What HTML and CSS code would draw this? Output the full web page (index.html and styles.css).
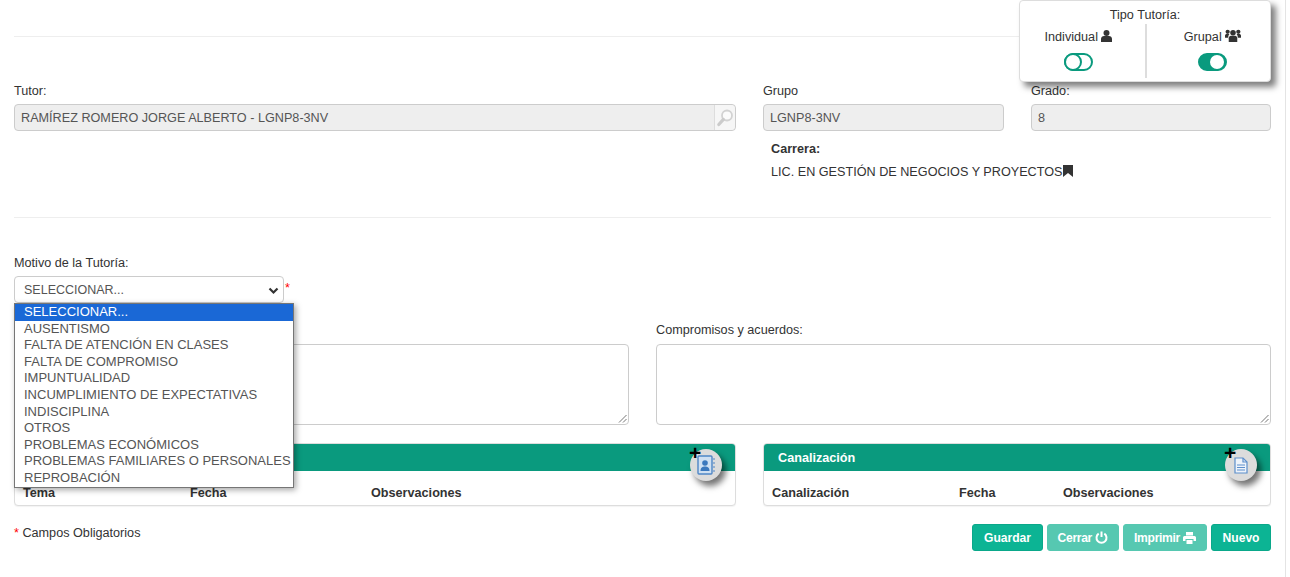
FILE: index.html
```html
<!DOCTYPE html>
<html lang="es">
<head>
<meta charset="utf-8">
<title>Tutoría</title>
<link rel="stylesheet" href="styles.css">
</head>
<body>
<main class="page">
  <hr class="rule first-rule">
  <section class="row-top">
    <div class="field">
      <label>Tutor:</label>
      <div class="input disabled tutor">
        <span>RAMÍREZ ROMERO JORGE ALBERTO - LGNP8-3NV</span>
        <span class="lookup">
          <svg width="18" height="18" viewBox="0 0 18 18"><circle cx="11" cy="6.500" r="5" fill="#fbfbfb" stroke="#d2d2d2" stroke-width="1.800"/><path d="M7.400 10.400 2.800 15.500" stroke="#cbcbcb" stroke-width="3.200" stroke-linecap="round"/></svg>
        </span>
      </div>
    </div>
    <div class="field">
      <label>Grupo</label>
      <div class="input disabled">LGNP8-3NV</div>
      <div class="carrera">
        <strong>Carrera:</strong>
        <p>LIC. EN GESTIÓN DE NEGOCIOS Y PROYECTOS<svg class="bookmark" width="10" height="12" viewBox="0 0 10 12"><path d="M0 0h10v12L5 8 0 12z" fill="#333"/></svg></p>
      </div>
    </div>
    <div class="field">
      <label>Grado:</label>
      <div class="input disabled">8</div>
    </div>
  </section>
  <hr class="rule second-rule">
  <section class="motivo">
    <label>Motivo de la Tutoría:</label>
    <div class="select-line">
      <div class="select">
        <span>SELECCIONAR...</span>
        <svg width="11" height="8" viewBox="0 0 11 8"><path d="M1.5 1.5 5.5 5.5 9.5 1.5" fill="none" stroke="#333" stroke-width="2.2"/></svg>
      </div>
      <span class="req">*</span>
    </div>
  </section>
  <section class="row-text">
    <div class="field">
      <div class="label-space"></div>
      <div class="textarea"><svg class="grip" width="9" height="9" viewBox="0 0 9 9"><path d="M8.5 1 1 8.5M8.5 5 5 8.5" stroke="#777" fill="none"/></svg></div>
    </div>
    <div class="field">
      <label>Compromisos y acuerdos:</label>
      <div class="textarea"><svg class="grip" width="9" height="9" viewBox="0 0 9 9"><path d="M8.5 1 1 8.5M8.5 5 5 8.5" stroke="#777" fill="none"/></svg></div>
    </div>
  </section>
  <section class="row-cards">
    <div class="card">
      <div class="card-head">
        <span class="fab">
          <b class="plus">+</b>
          <svg width="18" height="20" viewBox="0 0 18 20"><rect x="1" y="1" width="14" height="18" rx="1" fill="#cfe0f2" stroke="#4f86c6" stroke-width="1.4"/><circle cx="8" cy="8" r="2.8" fill="#3b78bd"/><path d="M3.500 16c0-3.500 2-4.500 4.500-4.500s4.500 1 4.500 4.500z" fill="#3b78bd"/><path d="M16 4h2M16 8h2M16 12h2M16 16h2" stroke="#4f86c6" stroke-width="1.200"/></svg>
        </span>
      </div>
      <div class="card-cols cols-tema"><span>Tema</span><span>Fecha</span><span>Observaciones</span></div>
    </div>
    <div class="card">
      <div class="card-head">
        <span>Canalización</span>
        <span class="fab">
          <b class="plus">+</b>
          <svg width="14" height="17" viewBox="0 0 14 17"><path d="M1 1h8l4 4v11H1z" fill="#eef3fa" stroke="#5d8fcb" stroke-width="1.200"/><path d="M9 1v4h4" fill="none" stroke="#5d8fcb" stroke-width="1.200"/><path d="M3 8h8M3 10.500h8M3 13h8" stroke="#5d8fcb" stroke-width="1.200"/></svg>
        </span>
      </div>
      <div class="card-cols cols-can"><span>Canalización</span><span>Fecha</span><span>Observaciones</span></div>
    </div>
  </section>
  <footer class="foot">
    <p class="note"><span class="req">*</span> Campos Obligatorios</p>
    <div class="buttons">
      <button class="btn">Guardar</button>
      <button class="btn off">Cerrar
        <svg width="13" height="13" viewBox="0 0 13 13"><path d="M3.700 2.700a5 5 0 1 0 5.600 0" fill="none" stroke="#fff" stroke-width="2"/><path d="M6.500 .5v5.500" stroke="#fff" stroke-width="2"/></svg>
      </button>
      <button class="btn off">Imprimir
        <svg width="13" height="12" viewBox="0 0 13 12"><path d="M3 0h7v3.500H3zM1.500 4h10A1.500 1.500 0 0 1 13 5.500V9h-2.500V7h-8v2H0V5.500A1.500 1.500 0 0 1 1.500 4zM3.500 8h6v4h-6z" fill="#fff"/></svg>
      </button>
      <button class="btn">Nuevo</button>
    </div>
  </footer>
</main>

<aside class="tipo">
  <div class="tipo-title">Tipo Tutoría:</div>
  <div class="tipo-cols">
    <div class="tipo-col">
      <span class="tipo-label">Individual
        <svg width="11" height="12" viewBox="0 0 11 12"><circle cx="5.500" cy="3" r="3" fill="#333"/><path d="M0 12V9c0-2 1.500-3 3-3h5c1.500 0 3 1 3 3v3z" fill="#333"/></svg>
      </span>
      <span class="switch"><i></i></span>
    </div>
    <div class="tipo-col">
      <span class="tipo-label">Grupal
        <svg width="16" height="13" viewBox="0 0 15 12"><circle cx="7.500" cy="3.500" r="2.600" fill="#333"/><circle cx="2.500" cy="2.500" r="2" fill="#333"/><circle cx="12.500" cy="2.500" r="2" fill="#333"/><path d="M3.500 12V8.500c0-1.500 1-2.300 2-2.300h4c1 0 2 .8 2 2.300V12z" fill="#333"/><path d="M0 8V6c0-1 .8-1.500 1.500-1.500h2c.3 0 .5 0 .7.200-.6.600-1 1.200-1.200 3.300zM15 8V6c0-1-.8-1.500-1.500-1.500h-2c-.3 0-.5 0-.7.200.6.600 1 1.200 1.200 3.300z" fill="#333"/></svg>
      </span>
      <span class="switch on"><i></i></span>
    </div>
  </div>
</aside>

<ul class="dropdown">
  <li class="selected">SELECCIONAR...</li>
  <li>AUSENTISMO</li>
  <li>FALTA DE ATENCIÓN EN CLASES</li>
  <li>FALTA DE COMPROMISO</li>
  <li>IMPUNTUALIDAD</li>
  <li>INCUMPLIMIENTO DE EXPECTATIVAS</li>
  <li>INDISCIPLINA</li>
  <li>OTROS</li>
  <li>PROBLEMAS ECONÓMICOS</li>
  <li>PROBLEMAS FAMILIARES O PERSONALES</li>
  <li>REPROBACIÓN</li>
</ul>
</body>
</html>
```
FILE: styles.css
```css
* { box-sizing: border-box; }
html, body { margin: 0; height: 100%; overflow: hidden; }
body {
  background: #fff;
  color: #333;
  font-family: "Liberation Sans", Arial, sans-serif;
  font-size: 12.65px;
  line-height: 1.43;
  position: relative;
}
.page {
  width: 1286px;
  height: 577px;
  padding: 36px 14px 0;
  border-right: 1px solid #e4e4e4;
}
.rule { border: 0; border-top: 1px solid #eee; margin: 0; }
.row-top {
  display: grid;
  grid-template-columns: 722px 241px 240px;
  gap: 27px;
  height: 180px;
  padding-top: 45px;
}
label { display: block; line-height: 18px; margin-bottom: 4px; }
.input {
  height: 27px;
  border: 1px solid #ccc;
  border-radius: 4px;
  padding: 1px 6px 0;
  display: flex;
  align-items: center;
}
.disabled { background: #eee; color: #555; }
.tutor { justify-content: space-between; padding: 0 0 0 6px; }
.tutor > span:first-child { padding-top: 1px; }
.lookup {
  width: 21px;
  height: 25px;
  background: #f6f6f6;
  border-left: 1px solid #ddd;
  display: flex;
  align-items: center;
  justify-content: center;
  border-radius: 0 4px 4px 0;
}
.carrera { padding: 9px 8px 0; }
.carrera strong { display: block; line-height: 18px; }
.carrera p { margin: 5px 0 0; line-height: 18px; white-space: nowrap; }
.bookmark { vertical-align: -1px; }
.motivo { padding-top: 36px; height: 103px; }
.motivo label { margin-bottom: 4px; }
.select-line { display: flex; align-items: flex-start; gap: 1px; }
.select-line .req { padding-top: 3px; }
.select {
  width: 270px;
  height: 27px;
  border: 1px solid #ccc;
  border-radius: 4px;
  padding: 2px 4px 0 9px;
  color: #555;
  font-size: 12.5px;
  display: flex;
  align-items: center;
  justify-content: space-between;
}
.req { color: #f00; }
.row-text {
  display: grid;
  grid-template-columns: 615px 615px;
  gap: 27px;
}
.row-text label { margin: 0 0 5px; }
.label-space { height: 18px; margin-bottom: 5px; }
.textarea {
  height: 81px;
  border: 1px solid #ccc;
  border-radius: 4px;
  position: relative;
}
.grip { position: absolute; right: 1px; bottom: 1px; }
.row-cards {
  display: grid;
  grid-template-columns: 722px 508px;
  gap: 27px;
  margin-top: 18px;
}
.card {
  height: 63px;
  border: 1px solid #ddd;
  border-radius: 4px;
  box-shadow: 0 1px 1px rgba(0,0,0,.05);
  background: #fff;
}
.card-head {
  height: 27px;
  background: #0a9a7e;
  color: #fff;
  font-weight: bold;
  padding: 5px 14px 0;
  line-height: 18px;
  border-radius: 3px 3px 0 0;
  position: relative;
}
.fab {
  position: absolute;
  right: 13px;
  top: 5px;
  width: 32px;
  height: 32px;
  border-radius: 50%;
  background: #dcdcdc;
  box-shadow: 4px 5px 6px rgba(0,0,0,.55);
  display: flex;
  align-items: center;
  justify-content: center;
}
.plus {
  position: absolute;
  left: -1px;
  top: -7px;
  color: #000;
  font-size: 21px;
  line-height: 21px;
  font-weight: bold;
}
.card-cols {
  display: grid;
  font-weight: bold;
  padding: 13px 8px 0;
  line-height: 18px;
}
.cols-tema { grid-template-columns: 167px 181px 1fr; }
.cols-can { grid-template-columns: 187px 104px 1fr; }
.foot {
  display: flex;
  justify-content: space-between;
  align-items: flex-start;
  margin-top: 18px;
}
.note { margin: 0; line-height: 18px; }
.buttons { display: flex; gap: 4px; }
.btn {
  height: 27px;
  border: 1px solid #0aa88a;
  border-radius: 3px;
  background: #0cb494;
  color: #fff;
  font: bold 12.1px "Liberation Sans", Arial, sans-serif;
  padding: 0 10.5px;
  display: flex;
  align-items: center;
  gap: 3px;
}
.btn.off {
  background: #56c8b1;
  border-color: #56c8b1;
  padding: 0 10px;
  letter-spacing: -.3px;
}
.tipo {
  position: absolute;
  left: 1019px;
  top: 0;
  width: 252px;
  height: 82px;
  background: #fff;
  border: 1px solid #ddd;
  border-radius: 4px;
  box-shadow: 5px 5px 6px rgba(0,0,0,.5);
  text-align: center;
}
.tipo-title { line-height: 18px; padding-top: 5px; height: 23px; }
.tipo-cols { display: grid; grid-template-columns: 1fr 1fr; height: 54px; }
.tipo-col {
  display: flex;
  flex-direction: column;
  align-items: center;
  gap: 7px;
  padding: 4px 8px 0 0;
}
.tipo-col + .tipo-col { border-left: 2px solid #ddd; padding: 4px 0 0 8px; }
.tipo-label { line-height: 18px; }
.tipo-label svg { vertical-align: -1px; }
.switch {
  width: 29px;
  height: 18px;
  border: 2px solid #0a9a7e;
  border-radius: 9px;
  position: relative;
  display: block;
}
.switch i {
  position: absolute;
  left: -2px;
  top: -2px;
  width: 18px;
  height: 18px;
  border-radius: 50%;
  background: #fff;
  border: 2px solid #0a9a7e;
}
.switch.on { background: #0a9a7e; }
.switch.on i { left: 10px; top: 0; width: 14px; height: 14px; border: 0; }
.dropdown {
  position: absolute;
  left: 14px;
  top: 303px;
  width: 280px;
  height: 185px;
  margin: 0;
  padding: 0;
  list-style: none;
  background: #fff;
  border: 1px solid #767676;
  box-shadow: 2px 2px 6px rgba(0,0,0,.35);
  color: #555;
}
.dropdown li {
  height: 16.6px;
  line-height: 16.6px;
  padding-left: 9px;
  white-space: nowrap;
  font-size: 13px;
}
.dropdown .selected { background: #1a68d6; color: #fff; }
```
